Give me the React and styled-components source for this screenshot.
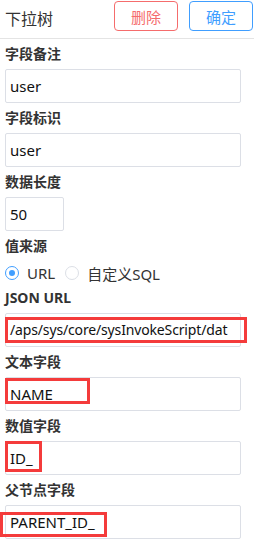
import React from 'react';
import styled, { createGlobalStyle } from 'styled-components';

const GlobalStyle = createGlobalStyle`
  body {
    margin: 0;
    background: #fff;
    font-family: "Noto Sans", "Noto Sans CJK SC", sans-serif;
    color: #333;
  }
`;

const Page = styled.div`
  width: 254px;
  height: 541px;
  overflow: hidden;
`;

const Header = styled.div`
  display: flex;
  align-items: center;
  justify-content: space-between;
  height: 38px;
  border-bottom: 1px solid #e4e4e4;
  padding: 0 1px 0 5px;
`;

const Title = styled.div`
  font-size: 16px;
  color: #333;
  font-family: "Noto Sans CJK SC", sans-serif;
  margin-top: -2px;
`;

const Buttons = styled.div`
  display: flex;
  gap: 11px;
  margin-top: -6px;
`;

const Button = styled.button`
  width: 64px;
  height: 30px;
  border-radius: 4px;
  background: #fff;
  border: 1px solid ${p => p.$color};
  color: ${p => p.$color};
  font-size: 15px;
  font-family: "Noto Sans CJK SC", sans-serif;
  padding: 0;
`;

const Form = styled.div`
  padding: 0 5px;
`;

const Label = styled.div`
  margin-top: ${p => p.$top || 5}px;
  line-height: 20px;
  height: 20px;
  font-size: 14px;
  font-weight: bold;
  color: #333;
`;

const InputWrap = styled.div`
  position: relative;
  margin-top: 5px;
  width: ${p => p.$width || 236}px;
`;

const Input = styled.div`
  box-sizing: border-box;
  height: 34px;
  border: 1px solid #dcdfe6;
  border-radius: 2px;
  padding: 0 4px;
  font-size: ${p => (p.$tight ? 14 : 15)}px;
  letter-spacing: ${p => (p.$tight ? '-0.15px' : 'normal')};
  line-height: 32px;
  color: #111;
  white-space: nowrap;
  overflow: hidden;
`;

const Highlight = styled.div`
  position: absolute;
  box-sizing: border-box;
  border: 3px solid #f43b3b;
  left: ${p => p.$left}px;
  top: ${p => p.$top}px;
  width: ${p => p.$w}px;
  height: ${p => p.$h}px;
  pointer-events: none;
`;

const RadioRow = styled.div`
  display: flex;
  align-items: center;
  height: 22px;
  margin-top: 6px;
  font-size: 15px;
`;

const RadioItem = styled.label`
  display: flex;
  align-items: center;
  gap: 8px;
  margin-right: 10px;
  color: #333;
`;

const Circle = styled.span`
  box-sizing: border-box;
  width: 14px;
  height: 14px;
  border-radius: 50%;
  border: 1px solid ${p => (p.$checked ? '#409eff' : '#dcdfe6')};
  display: flex;
  align-items: center;
  justify-content: center;
  &::after {
    content: '';
    width: 6px;
    height: 6px;
    border-radius: 50%;
    background: ${p => (p.$checked ? '#409eff' : 'transparent')};
  }
`;

const Field = ({ label, value, width, mark, top }) => (
  <>
    <Label $top={top}>{label}</Label>
    <InputWrap $width={width}>
      <Input>{value}</Input>
      {mark && <Highlight $left={mark[0]} $top={mark[1]} $w={mark[2]} $h={mark[3]} />}
    </InputWrap>
  </>
);

export default function App() {
  return (
    <Page>
      <GlobalStyle />
      <Header>
        <Title>下拉树</Title>
        <Buttons>
          <Button $color="#f56c6c">删除</Button>
          <Button $color="#409eff">确定</Button>
        </Buttons>
      </Header>
      <Form>
        <Field label="字段备注" value="user" />
        <Field label="字段标识" value="user" />
        <Field label="数据长度" value="50" width={59} />
        <Label>值来源</Label>
        <RadioRow>
          <RadioItem><Circle $checked />URL</RadioItem>
          <RadioItem><Circle />自定义SQL</RadioItem>
        </RadioRow>
        <Label $top={4}>JSON URL</Label>
        <InputWrap>
          <Input $tight>/aps/sys/core/sysInvokeScript/dat</Input>
          <Highlight $left={0} $top={4} $w={242} $h={26} />
        </InputWrap>
        <Field label="文本字段" value="NAME" mark={[0, 1, 85, 26]} />
        <Field label="数值字段" value="ID_" mark={[0, 0, 37, 31]} />
        <Field label="父节点字段" value="PARENT_ID_" mark={[-5, 7, 107, 25]} />
      </Form>
    </Page>
  );
}
